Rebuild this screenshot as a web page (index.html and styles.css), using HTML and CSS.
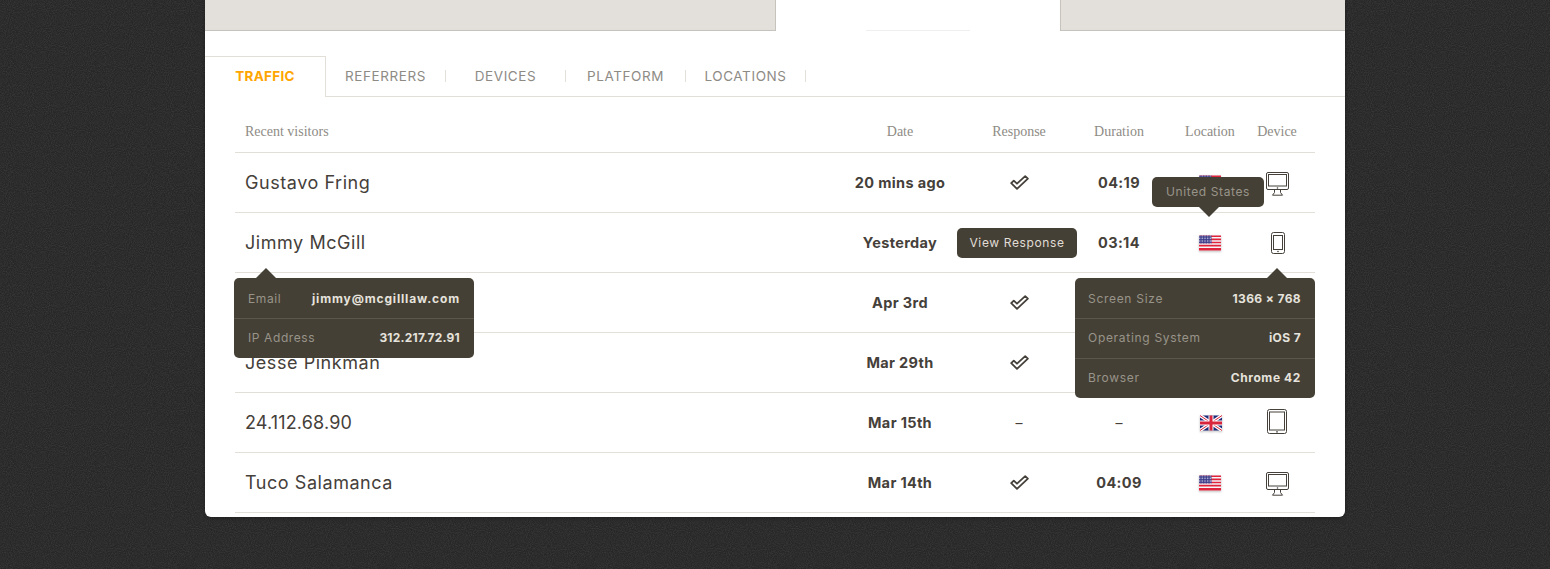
FILE: index.html
```html
<!DOCTYPE html>
<html lang="en">
<head>
<meta charset="utf-8">
<title>Traffic</title>
<link rel="stylesheet" href="styles.css">
</head>
<body>
<svg class="defs" width="0" height="0" aria-hidden="true">
  <defs>
    <pattern id="stars" width="1.6" height="1.6" patternUnits="userSpaceOnUse"><rect width="1.6" height="1.6" fill="#3c3b8a"/><rect width=".8" height=".8" fill="#cfd0e6"/></pattern>
    <symbol id="us" viewBox="0 0 22 16">
      <rect y=".5" width="22" height="15" fill="#f6f6f8"/>
      <path d="M0 .5h22v1.6H0zM0 3.6h22v1.6H0zM0 6.7h22v1.6H0zM0 9.8h22v1.6H0zM0 12.9h22v2.6H0z" fill="#e0243c"/>
      <rect y=".5" width="12.5" height="8" fill="url(#stars)"/>
    </symbol>
    <symbol id="uk" viewBox="0 0 22 16">
      <rect y=".5" width="22" height="15" fill="#1c2a78"/>
      <path d="M0 .5 22 15.5M22 .5 0 15.5" stroke="#fff" stroke-width="3.4"/>
      <path d="M0 .5 22 15.5M22 .5 0 15.5" stroke="#d8243c" stroke-width="1"/>
      <path d="M11 .5v15M0 8h22" stroke="#fff" stroke-width="5"/>
      <path d="M11 .5v15M0 8h22" stroke="#d8243c" stroke-width="3"/>
    </symbol>
    <symbol id="desktop" viewBox="0 0 23 24">
      <rect x=".5" y=".5" width="22" height="17" rx="1.5" fill="none" stroke="currentColor"/>
      <rect x="2.5" y="2.5" width="18" height="11.5" fill="none" stroke="currentColor"/>
      <circle cx="11.5" cy="16" r=".8" fill="currentColor"/>
      <path d="M8.5 18v2.5l-2 2.7h10l-2-2.7V18" fill="none" stroke="currentColor"/>
    </symbol>
    <symbol id="phone" viewBox="0 0 14 22">
      <rect x=".5" y=".5" width="13" height="21" rx="2" fill="none" stroke="currentColor"/>
      <rect x="2.5" y="3.5" width="9" height="14" fill="none" stroke="currentColor"/>
      <circle cx="7" cy="19.5" r=".8" fill="currentColor"/>
    </symbol>
    <symbol id="tablet" viewBox="0 0 20 25">
      <rect x=".5" y=".5" width="19" height="24" rx="2" fill="none" stroke="currentColor"/>
      <rect x="2.5" y="3" width="15" height="18" fill="none" stroke="currentColor"/>
      <circle cx="10" cy="22.9" r=".8" fill="currentColor"/>
    </symbol>
    <symbol id="check" viewBox="0 0 19 15">
      <path d="M1.2 8.2 3.8 5.6 7 8.7 15.2 1.2 17.9 3.6 7 13.8Z" fill="none" stroke="currentColor" stroke-width="1.8" stroke-linejoin="round"/>
    </symbol>
  </defs>
</svg>
<main class="card">
  <div class="top-strip">
    <div class="strip-gray strip-left"></div>
    <div class="strip-open"><span class="strip-line"></span></div>
    <div class="strip-gray strip-right"></div>
  </div>
  <nav class="tabs">
    <a class="tab tab-active">TRAFFIC</a>
    <a class="tab"><span class="tab-label">REFERRERS</span></a>
    <a class="tab"><span class="tab-label">DEVICES</span></a>
    <a class="tab"><span class="tab-label">PLATFORM</span></a>
    <a class="tab"><span class="tab-label">LOCATIONS</span></a>
  </nav>
  <section class="table">
    <div class="row head">
      <div class="name-col">Recent visitors</div>
      <div class="cell">Date</div>
      <div class="cell">Response</div>
      <div class="cell">Duration</div>
      <div class="cell">Location</div>
      <div class="cell">Device</div>
    </div>
    <div class="row">
      <div class="name-col name">Gustavo Fring</div>
      <div class="cell strong">20 mins ago</div>
      <div class="cell"><svg class="i-check"><use href="#check"/></svg></div>
      <div class="cell strong">04:19</div>
      <div class="cell"><svg class="flag"><use href="#us"/></svg></div>
      <div class="cell"><svg class="i-desktop"><use href="#desktop"/></svg></div>
    </div>
    <div class="row">
      <div class="name-col name">Jimmy McGill</div>
      <div class="cell strong">Yesterday</div>
      <div class="cell"></div>
      <div class="cell strong">03:14</div>
      <div class="cell"><svg class="flag"><use href="#us"/></svg></div>
      <div class="cell"><svg class="i-phone"><use href="#phone"/></svg></div>
    </div>
    <div class="row">
      <div class="name-col name"></div>
      <div class="cell strong">Apr 3rd</div>
      <div class="cell"><svg class="i-check"><use href="#check"/></svg></div>
      <div class="cell"></div>
      <div class="cell"></div>
      <div class="cell"></div>
    </div>
    <div class="row">
      <div class="name-col name">Jesse Pinkman</div>
      <div class="cell strong">Mar 29th</div>
      <div class="cell"><svg class="i-check"><use href="#check"/></svg></div>
      <div class="cell"></div>
      <div class="cell"></div>
      <div class="cell"></div>
    </div>
    <div class="row">
      <div class="name-col name ip">24.112.68.90</div>
      <div class="cell strong">Mar 15th</div>
      <div class="cell dash">–</div>
      <div class="cell dash">–</div>
      <div class="cell"><svg class="flag flag-uk"><use href="#uk"/></svg></div>
      <div class="cell"><svg class="i-tablet"><use href="#tablet"/></svg></div>
    </div>
    <div class="row">
      <div class="name-col name">Tuco Salamanca</div>
      <div class="cell strong">Mar 14th</div>
      <div class="cell"><svg class="i-check"><use href="#check"/></svg></div>
      <div class="cell strong">04:09</div>
      <div class="cell"><svg class="flag"><use href="#us"/></svg></div>
      <div class="cell"><svg class="i-desktop"><use href="#desktop"/></svg></div>
    </div>
  </section>

  <div class="tip tip-country">United States</div>
  <div class="tip tip-response">View Response</div>
  <dl class="pop pop-user">
    <div class="pop-row"><dt>Email</dt><dd class="email">jimmy@mcgilllaw.com</dd></div>
    <div class="pop-row"><dt>IP Address</dt><dd class="ip-value">312.217.72.91</dd></div>
  </dl>
  <dl class="pop pop-device">
    <div class="pop-row"><dt>Screen Size</dt><dd>1366 × 768</dd></div>
    <div class="pop-row"><dt>Operating System</dt><dd>iOS 7</dd></div>
    <div class="pop-row"><dt>Browser</dt><dd class="browser">Chrome 42</dd></div>
  </dl>
</main>
</body>
</html>
```

FILE: styles.css
```css
* { box-sizing: border-box; }
html, body { margin: 0; height: 100%; overflow: hidden; }
body {
  background-color: #272727;
  background-image: url("data:image/svg+xml,%3Csvg xmlns='http://www.w3.org/2000/svg' width='200' height='200'%3E%3Cfilter id='n'%3E%3CfeTurbulence type='fractalNoise' baseFrequency='.95' numOctaves='2' stitchTiles='stitch'/%3E%3CfeColorMatrix values='0 0 0 0 1 0 0 0 0 1 0 0 0 0 1 .5 0 0 0 -.17'/%3E%3C/filter%3E%3Crect width='200' height='200' filter='url(%23n)' opacity='.3'/%3E%3C/svg%3E");
  font-family: Inter, "Liberation Sans", sans-serif;
  color: #45403a;
}
.defs { position: absolute; }
.card {
  position: relative;
  width: 1140px;
  height: 517px;
  margin-left: 205px;
  background: #fff;
  border-radius: 0 0 6px 6px;
  box-shadow: 0 1px 4px rgba(0,0,0,.35);
}
.top-strip { display: flex; height: 31px; }
.strip-gray { background: #e3e0db; border-bottom: 1px solid #c6c3bd; }
.strip-left { width: 571px; border-right: 1px solid #c6c3bd; }
.strip-open { width: 284px; display: flex; justify-content: center; align-items: flex-end; }
.strip-line { width: 104px; height: 1px; background: #efefef; }
.strip-right { flex: 1; border-left: 1px solid #c6c3bd; }

.tabs {
  display: flex;
  margin-top: 25px;
  height: 41px;
  border-bottom: 1px solid #e2dfd9;
}
.tab {
  width: 120px;
  display: flex;
  align-items: center;
  justify-content: center;
  font-size: 13.5px;
  letter-spacing: .6px;
  color: #8e8b85;
  font-weight: 400;
}
.tab-active {
  width: 121px;
  height: 41px;
  padding-bottom: 2px;
  background: #fff;
  border-top: 1px solid #e2dfd9;
  border-right: 1px solid #e2dfd9;
  color: #ffa500;
  font-weight: 700;
  letter-spacing: .3px;
}
.tab-label {
  width: 120px;
  text-align: center;
  line-height: 12px;
  border-right: 1px solid #e2dfd9;
}
.table { margin: 0 30px; }
.row {
  display: grid;
  grid-template-columns: 605px 120px 118px 82px 100px 34px;
  align-items: center;
  height: 60px;
  border-bottom: 1px solid #e2dfd9;
}
.row.head {
  height: 56px;
  padding-top: 14px;
  font-family: "Liberation Serif", serif;
  font-size: 14px;
  color: #8e8b85;
}
.name-col { padding-left: 10px; }
.name { font-size: 18px; letter-spacing: .55px; padding-bottom: 1px; }
.ip { letter-spacing: .15px; }
.cell { display: flex; justify-content: center; align-items: center; white-space: nowrap; }
.strong { font-size: 14.5px; font-weight: 700; letter-spacing: .35px; }
.dash { font-size: 14px; }
.flag { width: 22px; height: 16px; filter: drop-shadow(0 1px 1px rgba(0,0,0,.25)); }
.flag-uk { margin-left: 2px; }
.i-check { width: 19px; height: 15px; color: #45403a; margin-bottom: 1px; }
.i-desktop { width: 23px; height: 24px; color: #45403a; margin: 2px 0 0 1px; }
.i-phone { width: 14px; height: 22px; color: #45403a; margin-left: 1px; }
.i-tablet { width: 20px; height: 25px; color: #45403a; margin-bottom: 2px; }

.tip, .pop { position: absolute; background: #454035; border-radius: 5px; margin: 0; }
.tip {
  display: flex;
  align-items: center;
  justify-content: center;
  padding-bottom: 2px;
  font-size: 12px;
  letter-spacing: .62px;
}
.tip-country { left: 947px; top: 177px; width: 112px; height: 30px; color: #98948a; }
.tip-country::after {
  content: "";
  position: absolute;
  left: 47px;
  top: 30px;
  border: 10px solid transparent;
  border-top-color: #454035;
  border-bottom-width: 0;
}
.tip-response { left: 752px; top: 228px; width: 120px; height: 30px; color: #e0ddd6; }
.pop { width: 240px; }
.pop::before {
  content: "";
  position: absolute;
  top: -10px;
  border: 10px solid transparent;
  border-bottom-color: #454035;
  border-top-width: 0;
}
.pop-user { left: 29px; top: 278px; }
.pop-user::before { left: 22px; }
.pop-device { left: 870px; top: 278px; }
.pop-device::before { left: 192px; }
.pop-row {
  display: flex;
  justify-content: space-between;
  align-items: center;
  height: 40px;
  padding: 0 14px;
  font-size: 12px;
}
.pop-device .pop-row { padding-left: 13px; }
.pop-row + .pop-row { border-top: 1px solid #5c574c; padding-bottom: 2px; }
.pop-row dt { color: #98948a; letter-spacing: .6px; }
.pop-device .pop-row dt { letter-spacing: .7px; }
.pop-row dd { margin: 0; color: #e6e3dd; font-weight: 700; letter-spacing: .38px; }
.pop-row .email { letter-spacing: .85px; }
.pop-row .ip-value { letter-spacing: .22px; }
.pop-row .browser { letter-spacing: .6px; }
```
